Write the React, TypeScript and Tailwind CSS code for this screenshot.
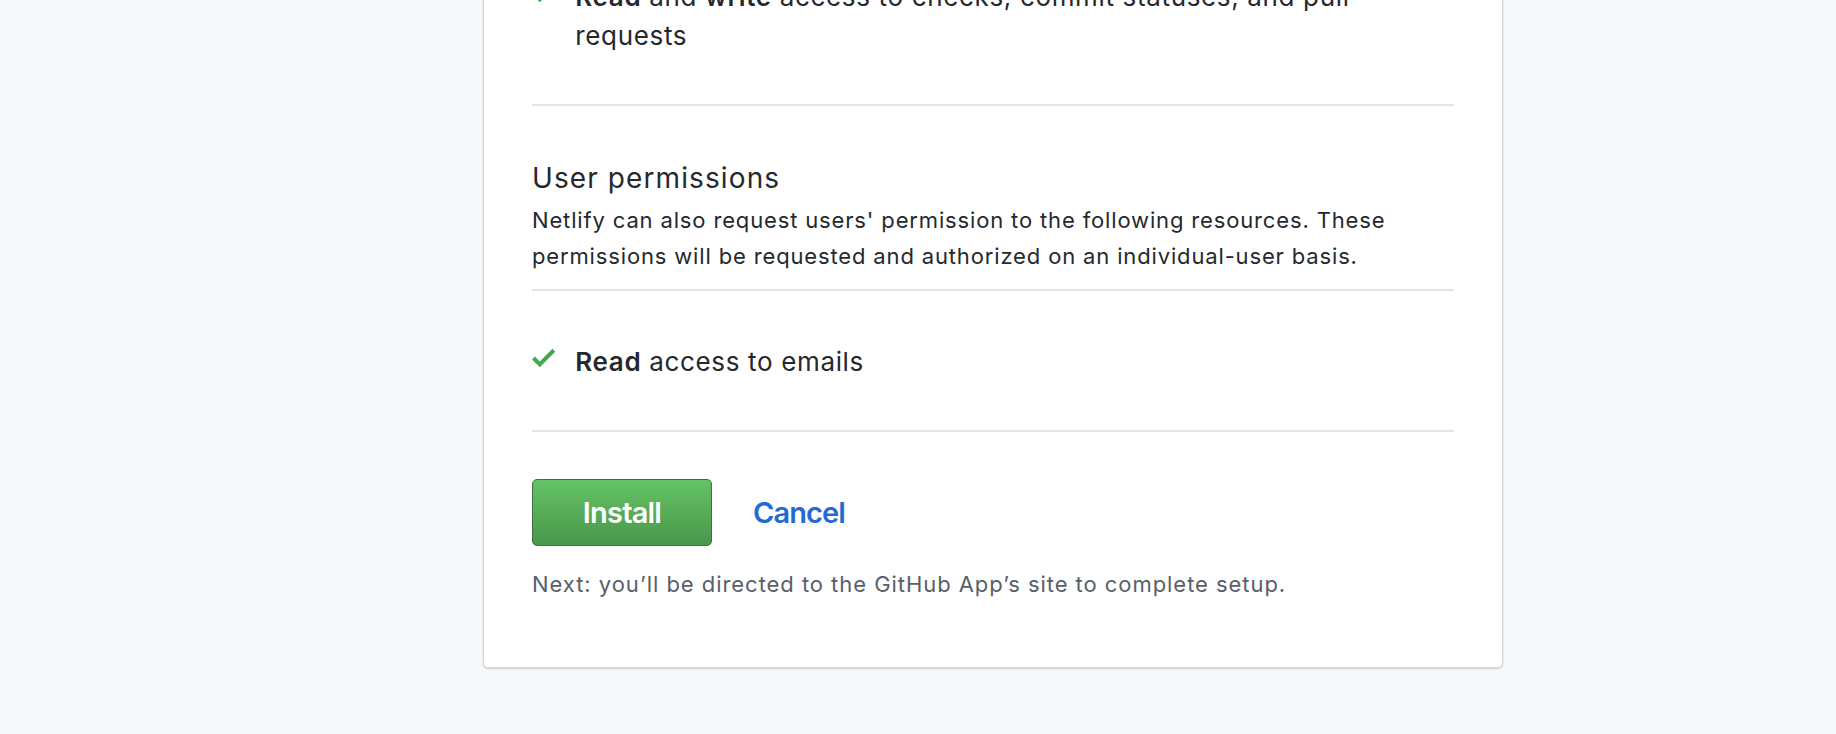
import { ReactNode } from "react";

const font = { fontFamily: "Inter, 'Noto Sans', sans-serif" };

const Check = () => (
  <svg viewBox="0 0 12 16" className="w-[23.3px] h-[31px] shrink-0 fill-[#46a84e]" aria-hidden>
    <path d="M12 5l-8 8-4-4 1.5-1.5L4 10l6.5-6.5L12 5z" />
  </svg>
);

const Permission = ({ children, className }: { children: ReactNode; className: string }) => (
  <div className={`flex gap-[20px] border-b-2 border-[#e1e4e8] ${className}`}>
    <Check />
    <div className="text-[26px] leading-[39px] tracking-[0.65px] text-[#24292e]">{children}</div>
  </div>
);

const App = () => {
  return (
    <div className="h-[734px] overflow-hidden bg-[#f6f8fa]" style={font}>
      <div className="ml-[483px] -mt-[74px] w-[1020px] bg-white border border-[#d1d5da] rounded-[5px] shadow-[0_1px_2px_rgba(27,31,35,0.18)]">
        <div className="px-[48px] pb-[65px]">
          <Permission className="pt-[50px] pb-[49px]">
            <b className="font-semibold">Read</b> and <b className="font-semibold">write</b> access to checks, commit statuses, and pull
            <br />
            requests
          </Permission>

          <div className="pt-[51px] pb-[15px] border-b-2 border-[#e1e4e8]">
            <h3 className="text-[28px] leading-[42px] tracking-[1.1px] font-normal text-[#24292e]">User permissions</h3>
            <p className="mt-[3px] text-[22px] leading-[36px] tracking-[0.85px] text-[#24292e]">
              Netlify can also request users' permission to the following resources. These permissions will be
              requested and authorized on an individual-user basis.
            </p>
          </div>

          <Permission className="pt-[51px] pb-[49px]">
            <b className="font-semibold">Read</b> access to emails
          </Permission>

          <div className="pt-[47px] flex items-center gap-[41px]">
            <button className="w-[180px] h-[67px] rounded-[5px] border border-[#3b723e] bg-gradient-to-b from-[#64c364] to-[#4a964b] text-white text-[29px] tracking-[-0.8px] font-semibold">
              Install
            </button>
            <a href="#" className="text-[29px] font-semibold tracking-[-0.9px] text-[#2469d4]">
              Cancel
            </a>
          </div>
          <p className="mt-[20px] text-[22px] leading-[36px] tracking-[0.95px] text-[#586069]">
            Next: you’ll be directed to the GitHub App’s site to complete setup.
          </p>
        </div>
      </div>
    </div>
  );
};

export default App;
